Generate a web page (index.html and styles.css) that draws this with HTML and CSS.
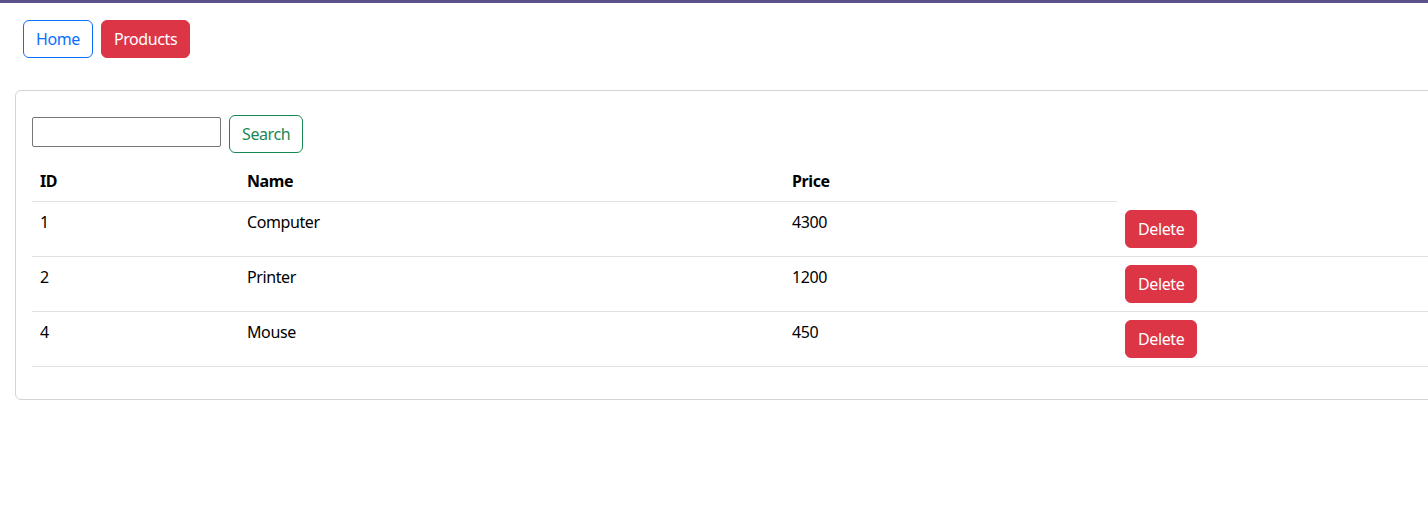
FILE: index.html
```html
<!DOCTYPE html>
<html lang="en">
<head>
<meta charset="utf-8">
<title>Products</title>
<link rel="stylesheet" href="styles.css">
</head>
<body>
<div class="topbar"></div>
<nav class="nav">
  <a class="btn btn-outline-primary" href="#">Home</a>
  <a class="btn btn-danger" href="#">Products</a>
</nav>
<div class="card">
  <div class="card-body">
    <form class="search">
      <input class="search-input" type="text">
      <button class="btn btn-outline-success" type="button">Search</button>
    </form>
    <table class="table">
      <colgroup>
        <col class="c-id"><col class="c-name"><col class="c-price"><col>
      </colgroup>
      <thead>
        <tr><th>ID</th><th>Name</th><th>Price</th></tr>
      </thead>
      <tbody>
        <tr><td>1</td><td>Computer</td><td>4300</td><td><button class="btn btn-danger" type="button">Delete</button></td></tr>
        <tr><td>2</td><td>Printer</td><td>1200</td><td><button class="btn btn-danger" type="button">Delete</button></td></tr>
        <tr><td>4</td><td>Mouse</td><td>450</td><td><button class="btn btn-danger" type="button">Delete</button></td></tr>
      </tbody>
    </table>
  </div>
</div>
</body>
</html>
```
FILE: styles.css
```css
html { overflow-x: hidden; }
body {
  margin: 0;
  font-family: "Segoe UI", "Noto Sans", "Open Sans", sans-serif;
  font-size: 16px;
  line-height: 24px;
  letter-spacing: -0.4px;
  color: #212529;
  background: #fff;
}
.topbar { height: 3px; background: #5c5289; }
.nav {
  display: flex;
  gap: 8px;
  padding: 17px 0 0 23px;
}
.btn {
  display: inline-block;
  box-sizing: border-box;
  height: 38px;
  padding: 6px 12px;
  font: inherit;
  font-size: 16px;
  line-height: 24px;
  letter-spacing: -0.4px;
  border: 1px solid transparent;
  border-radius: 6px;
  text-decoration: none;
  background: transparent;
  cursor: pointer;
}
.btn-outline-primary { color: #0d6efd; border-color: #0d6efd; }
.btn-outline-success { color: #198754; border-color: #198754; }
.btn-danger { color: #fff; background: #dc3545; border-color: #dc3545; }
.card {
  margin: 32px 0 0 15px;
  width: 1500px;
  border: 1px solid #d4d4d4;
  border-radius: 6px;
}
.card-body { padding: 16px; }
.search {
  display: flex;
  align-items: flex-start;
  gap: 8px;
  margin: 8px 0 0 0;
}
.search-input {
  box-sizing: border-box;
  width: 189px;
  height: 30px;
  margin: 2px 0 0 0;
  border: 1px solid #767676;
  border-radius: 2px;
  font: inherit;
}
.table {
  width: 100%;
  border-collapse: collapse;
  margin: 8px 0 16px;
  table-layout: fixed;
}
.c-id { width: 207px; }
.c-name { width: 545px; }
.c-price { width: 333px; }
.table th, .table td {
  padding: 8px;
  text-align: left;
  vertical-align: top;
  border-bottom: 1px solid #dee2e6;
}
.table th { font-weight: 700; color: #000; }
.table td { color: #000; }
```
